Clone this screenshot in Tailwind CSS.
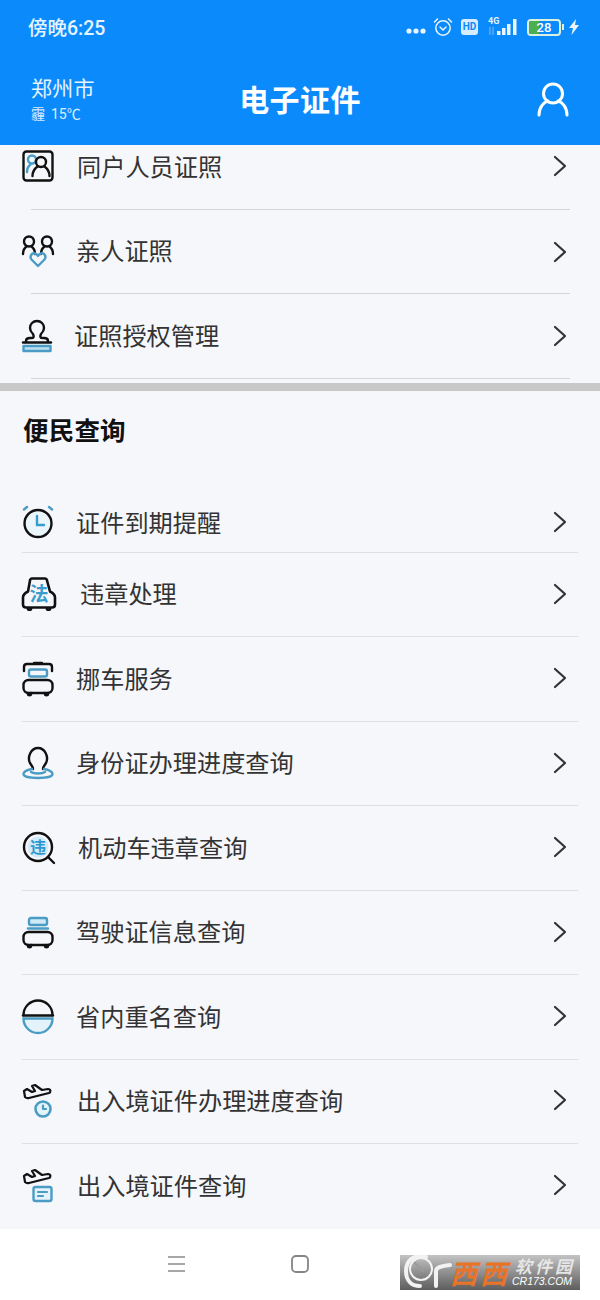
<!DOCTYPE html><html lang="zh-CN">
<head>
  <meta charset="UTF-8" />
  <meta name="viewport" content="width=device-width, initial-scale=1.0" />
  <title>电子证件</title>
  <script src="https://cdn.jsdelivr.net/npm/@tailwindcss/browser@4"></script>
</head>
<body class="bg-[#f6f7fb] text-[#333] font-['Roboto','Noto_Sans_CJK_SC',sans-serif]">
<div class="relative w-[600px] h-[1300px] overflow-hidden flex flex-col">

  <!-- Header -->
  <header class="h-[145px] bg-[#0b8bfb] text-white shrink-0">
    <div class="h-[54px] pl-[28px] pr-[20px] flex items-center justify-between">
      <span class="mt-[3px] text-[19.5px] font-medium text-white/90">傍晚6:25</span>
      <div class="flex items-center">
        <svg width="20" height="6" viewBox="0 0 20 6" class="mt-[8px]" fill="#eaf5ff"><circle cx="3" cy="3" r="2.6"/><circle cx="10" cy="3" r="2.6"/><circle cx="17" cy="3" r="2.6"/></svg>
        <svg width="20" height="20" viewBox="0 0 20 20" class="ml-[7px]" fill="none" stroke="#eaf5ff" stroke-width="1.5"><circle cx="10" cy="11" r="7.2"/><path d="M7 10l3 3 3-3M1.5 5l3-3M18.5 5l-3-3" stroke-linecap="round"/></svg>
        <span class="ml-[8px] w-[17px] h-[16px] rounded-[3px] bg-[#d8ecff] text-[#0b8bfb] text-[10px] font-bold leading-[16px] text-center">HD</span>
        <div class="relative ml-[10px] w-[32px] h-[18px]">
          <span class="absolute left-0 -top-[2px] text-[9px] font-bold leading-[10px] text-white/90">4G</span>
          <svg width="32" height="18" viewBox="0 0 32 18" fill="#eaf5ff"><rect x="9" y="13" width="3.500" height="4"/><rect x="14" y="10" width="3.500" height="7"/><rect x="19" y="6" width="3.500" height="11"/><rect x="25" y="1" width="3.500" height="16"/><path d="M2 9v8M5 9v8" stroke="#7cc0f5" stroke-width="1"/></svg>
        </div>
        <div class="ml-[7px] relative w-[34px] h-[17px] rounded-[4px] border-2 border-[#d9f0e2] overflow-hidden">
          <div class="absolute inset-y-0 left-0 w-[10px] bg-[#4caf50]"></div>
          <span class="absolute inset-0 text-center text-[13px] leading-[13px] font-medium text-white">28</span>
        </div>
        <span class="ml-[1px] w-[2px] h-[6px] bg-[#d9f0e2]"></span>
        <svg width="11" height="16" viewBox="0 0 11 16" class="ml-[5px]" fill="#eaf5ff"><path d="M7 0L0 9h4l-1.500 7L10 6H6z"/></svg>
      </div>
    </div>
    <div class="h-[91px] pl-[31px] pr-[31px] grid grid-cols-[1fr_auto_1fr] items-start">
      <div>
        <div class="mt-[21px] text-[21px] leading-[28px] tracking-[0.3px] text-white/90">郑州市</div>
        <div class="mt-[2px] flex items-center text-[14px] leading-[18px] text-white/85"><span class="text-[14px]">霾</span><span class="ml-[6px]">15℃</span></div>
      </div>
      <h1 class="mt-[25px] text-[30px] leading-[44px] tracking-[0.4px] font-bold">电子证件</h1>
      <div class="flex justify-end">
        <svg width="32" height="36" viewBox="0 0 32 36" class="mt-[27px]" fill="none" stroke="white" stroke-width="3" stroke-linecap="round"><circle cx="16" cy="12.500" r="9.500"/><path d="M2 34c0-8 5-13 9-14M30 34c0-8-5-13-9-14"/></svg>
      </div>
    </div>
  </header>

  <!-- Top list -->
  <section class="shrink-0 text-[24.2px]">
    <div class="h-[65px] ml-[31px] mr-[30px] pb-[22px] border-b border-[#d4d4d4] flex items-center justify-between pr-[2px]">
      <div class="flex items-center -ml-[11px]">
        <svg width="36" height="36" viewBox="0 0 36 36" fill="none" stroke-width="2.400" stroke-linecap="round"><rect x="3.500" y="3.500" width="29" height="29" rx="3" stroke="#111"/><circle cx="12" cy="11.500" r="4" stroke="#4a9cc4"/><path d="M7 24c0-4 1.500-6 3.500-7.500" stroke="#4a9cc4"/><circle cx="21" cy="14" r="5" stroke="#111"/><path d="M12.500 28c0-5 3-8 5-9.500M29.500 28c0-5-3-8-5-9.500" stroke="#111"/></svg>
        <span class="ml-[21px] mt-[4px]">同户人员证照</span>
      </div>
      <svg width="16" height="24" viewBox="0 0 16 24" fill="none" stroke="#333" stroke-width="2.2" stroke-linecap="round" stroke-linejoin="round"><path d="M3 3l10 9-10 9"/></svg>
    </div>
    <div class="h-[84px] ml-[31px] mr-[30px] border-b border-[#d4d4d4] flex items-center justify-between pr-[2px]">
      <div class="flex items-center -ml-[11px]">
        <svg width="36" height="36" viewBox="0 0 36 36" fill="none" stroke-width="2.400" stroke-linecap="round"><circle cx="9" cy="8.500" r="5" stroke="#111"/><circle cx="27" cy="8.500" r="5" stroke="#111"/><path d="M3 21c0-4 1.500-6 3.500-7.500M15 21c0-4-1.500-6-3.500-7.500M21 21c0-4 1.500-6 3.500-7.500M33 21c0-4-1.500-6-3.500-7.500" stroke="#111"/><path d="M18 33l-6.500-6.500c-2.500-3 .5-7 3.500-6 1.500.5 2.500 1.500 3 2.500.5-1 1.500-2 3-2.500 3-1 6 3 3.500 6z" stroke="#4a9cc4" stroke-linejoin="round"/></svg>
        <span class="ml-[20px] mt-[2px]">亲人证照</span>
      </div>
      <svg width="16" height="24" viewBox="0 0 16 24" fill="none" stroke="#333" stroke-width="2.2" stroke-linecap="round" stroke-linejoin="round"><path d="M3 3l10 9-10 9"/></svg>
    </div>
    <div class="h-[85px] ml-[31px] mr-[30px] border-b border-[#d4d4d4] flex items-center justify-between pr-[2px]">
      <div class="flex items-center -ml-[11px]">
        <svg width="36" height="36" viewBox="0 0 36 36" fill="none" stroke-width="2.400" stroke-linecap="round" stroke-linejoin="round"><path d="M3 24.500h28" stroke="#111"/><path d="M6 24v-1c0-2 2-3 4-3h2c2 0 2-2 1-4-1-1-3-4-3-6 0-4 3-7 7-7s7 3 7 7c0 2-2 5-3 6-1 2-1 4 1 4h2c2 0 4 1 4 3v1" stroke="#111"/><rect x="3.500" y="28" width="27" height="5" fill="#bfe0f2" stroke="#4a9cc4"/></svg>
        <span class="ml-[18px] mt-[2px]">证照授权管理</span>
      </div>
      <svg width="16" height="24" viewBox="0 0 16 24" fill="none" stroke="#333" stroke-width="2.2" stroke-linecap="round" stroke-linejoin="round"><path d="M3 3l10 9-10 9"/></svg>
    </div>
  </section>

  <div class="mt-[4px] h-[8px] bg-[#c8c8c8] shrink-0"></div>

  <!-- 便民查询 -->
  <section class="flex-1 text-[24.2px]">
    <h2 class="h-[80px] pl-[23px] flex items-center text-[25.5px] tracking-[0.2px] font-bold text-[#111]">便民查询</h2>
    <div class="mt-[21px] h-[61px] ml-[22px] mr-[22px] border-b border-[#dfdfdf] flex items-center justify-between pr-[10px]">
      <div class="flex items-center -ml-[2px]">
        <svg width="36" height="36" viewBox="0 0 36 36" fill="none" stroke-width="2.400" stroke-linecap="round"><circle cx="18" cy="19.500" r="13.500" fill="#eaf6fc" stroke="#111"/><path d="M17 12v9h7" stroke="#3a9ccc"/><path d="M4 5.500l3-2.500M32 5.500l-3-2.500" stroke="#4a9cc4"/></svg>
        <span class="ml-[20px] mt-[5px]">证件到期提醒</span>
      </div>
      <svg width="16" height="24" viewBox="0 0 16 24" fill="none" stroke="#333" stroke-width="2.2" stroke-linecap="round" stroke-linejoin="round"><path d="M3 3l10 9-10 9"/></svg>
    </div>
    <div class="h-[84px] ml-[22px] mr-[22px] border-b border-[#dfdfdf] flex items-center justify-between pr-[10px]">
      <div class="flex items-center -ml-[2px]">
        <svg width="38" height="36" viewBox="0 0 38 36" fill="none" stroke="#111" stroke-width="2.600" stroke-linejoin="round"><path d="M12 2.500h13c1 0 2 1 2 2l3 11c2 1 5 3 5 6v7c0 2-1 3-3 3H6c-2 0-3-1-3-3v-7c0-3 3-5 5-6l2-11c0-1 1-2 2-2z"/><path d="M8 31v2c0 1 3 1 3 0v-2M27 31v2c0 1 3 1 3 0v-2"/><text x="19" y="25" text-anchor="middle" font-size="19" font-weight="700" fill="#3a9ccc" stroke="none" font-family="Noto Sans CJK SC">法</text></svg>
        <span class="ml-[22px] mt-[2px]">违章处理</span>
      </div>
      <svg width="16" height="24" viewBox="0 0 16 24" class="-mt-[2px]" fill="none" stroke="#333" stroke-width="2.2" stroke-linecap="round" stroke-linejoin="round"><path d="M3 3l10 9-10 9"/></svg>
    </div>
    <div class="h-[85px] ml-[22px] mr-[22px] border-b border-[#dfdfdf] flex items-center justify-between pr-[10px]">
      <div class="flex items-center -ml-[2px]">
        <svg width="36" height="36" viewBox="0 0 36 36" fill="none" stroke-width="2.400" stroke-linecap="round" stroke-linejoin="round"><path d="M4 10V6c0-2 1-3 3-3h22c2 0 3 1 3 3v4M14 2h8" stroke="#111"/><rect x="9" y="8.500" width="18" height="7" rx="2" stroke="#4a9cc4"/><rect x="3.500" y="19" width="29" height="13" rx="5" stroke="#111"/><path d="M8 32v1.500c0 1 3 1 3 0V32M25 32v1.500c0 1 3 1 3 0V32" stroke="#111"/></svg>
        <span class="ml-[20px] mt-[2px]">挪车服务</span>
      </div>
      <svg width="16" height="24" viewBox="0 0 16 24" class="-mt-[2px]" fill="none" stroke="#333" stroke-width="2.2" stroke-linecap="round" stroke-linejoin="round"><path d="M3 3l10 9-10 9"/></svg>
    </div>
    <div class="h-[84px] ml-[22px] mr-[22px] border-b border-[#dfdfdf] flex items-center justify-between pr-[10px]">
      <div class="flex items-center -ml-[2px]">
        <svg width="36" height="36" viewBox="0 0 36 36" fill="none" stroke-width="2.400" stroke-linecap="round" stroke-linejoin="round"><path d="M13 24c0-2-1-3-3-6-3-6 1-15 8-15s11 9 8 15c-2 3-3 4-3 6" stroke="#111"/><path d="M12 24c-5 1-8.500 2.500-8.500 5 0 2.500 6 4 14.500 4s14.500-1.500 14.500-4c0-2.500-3.500-4-8.500-5" stroke="#4a9cc4"/><path d="M11 27c3 2 11 2 14 0" stroke="#4a9cc4"/></svg>
        <span class="ml-[20px] mt-[2px]">身份证办理进度查询</span>
      </div>
      <svg width="16" height="24" viewBox="0 0 16 24" class="-mt-[2px]" fill="none" stroke="#333" stroke-width="2.2" stroke-linecap="round" stroke-linejoin="round"><path d="M3 3l10 9-10 9"/></svg>
    </div>
    <div class="h-[85px] ml-[22px] mr-[22px] border-b border-[#dfdfdf] flex items-center justify-between pr-[10px]">
      <div class="flex items-center -ml-[2px]">
        <svg width="36" height="36" viewBox="0 0 36 36" fill="none" stroke-linecap="round"><circle cx="18" cy="17" r="14" stroke="#111" stroke-width="2.400"/><circle cx="18" cy="17" r="10.500" fill="#d2ebf8"/><path d="M28 27l6 6" stroke="#111" stroke-width="2.400"/><text x="18" y="23" text-anchor="middle" font-size="16" font-weight="700" fill="#2f97cf" font-family="Noto Sans CJK SC">违</text></svg>
        <span class="ml-[22px] mt-[2px]">机动车违章查询</span>
      </div>
      <svg width="16" height="24" viewBox="0 0 16 24" class="-mt-[2px]" fill="none" stroke="#333" stroke-width="2.2" stroke-linecap="round" stroke-linejoin="round"><path d="M3 3l10 9-10 9"/></svg>
    </div>
    <div class="h-[84px] ml-[22px] mr-[22px] border-b border-[#dfdfdf] flex items-center justify-between pr-[10px]">
      <div class="flex items-center -ml-[2px]">
        <svg width="36" height="36" viewBox="0 0 36 36" fill="none" stroke-width="2.400" stroke-linecap="round" stroke-linejoin="round"><rect x="9" y="4" width="18" height="7" rx="2" fill="#cfe9f7" stroke="#4a9cc4"/><path d="M8 14.500h20" stroke="#4a9cc4"/><rect x="3.500" y="18" width="29" height="13" rx="5" stroke="#111"/><path d="M8 31v1.500c0 1 3 1 3 0V31M25 31v1.500c0 1 3 1 3 0V31" stroke="#111"/></svg>
        <span class="ml-[20px] mt-[2px]">驾驶证信息查询</span>
      </div>
      <svg width="16" height="24" viewBox="0 0 16 24" class="-mt-[2px]" fill="none" stroke="#333" stroke-width="2.2" stroke-linecap="round" stroke-linejoin="round"><path d="M3 3l10 9-10 9"/></svg>
    </div>
    <div class="h-[85px] ml-[22px] mr-[22px] border-b border-[#dfdfdf] flex items-center justify-between pr-[10px]">
      <div class="flex items-center -ml-[2px]">
        <svg width="36" height="36" viewBox="0 0 36 36" fill="none" stroke-width="2.400" stroke-linecap="round"><path d="M3.500 16a14.500 14.500 0 0 1 29 0" stroke="#111"/><path d="M3 16.500h30" stroke="#111"/><path d="M3.500 19.500a14.500 14.500 0 0 0 29 0z" fill="#e4f3fa" stroke="#4a9cc4"/></svg>
        <span class="ml-[20px] mt-[2px]">省内重名查询</span>
      </div>
      <svg width="16" height="24" viewBox="0 0 16 24" class="-mt-[2px]" fill="none" stroke="#333" stroke-width="2.2" stroke-linecap="round" stroke-linejoin="round"><path d="M3 3l10 9-10 9"/></svg>
    </div>
    <div class="h-[84px] ml-[22px] mr-[22px] border-b border-[#dfdfdf] flex items-center justify-between pr-[10px]">
      <div class="flex items-center -ml-[2px]">
        <svg width="36" height="36" viewBox="0 0 36 36" fill="none" stroke-width="2.200" stroke-linecap="round" stroke-linejoin="round"><path d="M4 8l3-2 5 3 3-1-3-5 3-1 7 5 6-1c3 0 3 3 1 4l-20 5c-2 .500-3 0-4-1z" stroke="#111"/><circle cx="23" cy="26" r="7.500" fill="#e4f3fa" stroke="#4a9cc4" stroke-width="2.600"/><path d="M23 22.500V26h3" stroke="#4a9cc4"/></svg>
        <span class="ml-[21px] mt-[2px]">出入境证件办理进度查询</span>
      </div>
      <svg width="16" height="24" viewBox="0 0 16 24" class="-mt-[4px]" fill="none" stroke="#333" stroke-width="2.2" stroke-linecap="round" stroke-linejoin="round"><path d="M3 3l10 9-10 9"/></svg>
    </div>
    <div class="h-[85px] ml-[22px] mr-[22px] flex items-center justify-between pr-[10px]">
      <div class="flex items-center -ml-[2px]">
        <svg width="36" height="36" viewBox="0 0 36 36" fill="none" stroke-width="2.200" stroke-linecap="round" stroke-linejoin="round"><path d="M4 8l3-2 5 3 3-1-3-5 3-1 7 5 6-1c3 0 3 3 1 4l-20 5c-2 .500-3 0-4-1z" stroke="#111"/><rect x="13.500" y="19" width="18" height="14" rx="2" fill="#e4f3fa" stroke="#4a9cc4" stroke-width="2.400"/><path d="M18 24h9M18 28h5" stroke="#4a9cc4"/></svg>
        <span class="ml-[21px] mt-[2px]">出入境证件查询</span>
      </div>
      <svg width="16" height="24" viewBox="0 0 16 24" class="-mt-[4px]" fill="none" stroke="#333" stroke-width="2.2" stroke-linecap="round" stroke-linejoin="round"><path d="M3 3l10 9-10 9"/></svg>
    </div>
  </section>

  <!-- Bottom nav -->
  <footer class="h-[71px] bg-white shrink-0 relative">
    <svg width="18" height="18" viewBox="0 0 18 18" class="absolute left-[168px] top-[26px]" stroke="#8a8a8a" stroke-width="1.500"><path d="M0 2h17M0 9h17M0 16h17"/></svg>
    <svg width="18" height="18" viewBox="0 0 18 18" class="absolute left-[291px] top-[26px]" fill="none" stroke="#858585" stroke-width="1.800"><rect x="1" y="1" width="16" height="16" rx="4"/></svg>
  </footer>

  <!-- Watermark -->
  <div class="absolute left-[400px] top-[1255px] w-[180px] h-[35px] bg-gradient-to-b from-[#c4c4c4] to-[#5e5e5e]">
    <svg width="56" height="35" viewBox="0 0 56 35" class="absolute left-0 top-0" fill="none" stroke="#f2f2f2" stroke-linecap="round"><path d="M26 2C13-1 6 6 6 16s6 15 14 15" stroke-width="4"/><circle cx="21" cy="14" r="11" stroke-width="2"/><path d="M15 8l8 8" stroke="#9a9a9a" stroke-width="2"/><path d="M36 31V16c0-4 6-5 14-6" stroke-width="4"/></svg>
    <span class="absolute left-[50px] top-[3px] text-[27px] leading-[30px] font-bold italic tracking-[3px] text-[#e8742a] [font-family:'Noto_Sans_CJK_SC']">西西</span>
    <span class="absolute left-[115px] top-[2px] text-[17px] leading-[18px] font-bold italic tracking-[3px] text-[#e6e6e6] [font-family:'Noto_Sans_CJK_SC']">软件园</span>
    <span class="absolute left-[112px] top-[20px] text-[10.5px] leading-[12px] italic text-white [font-family:'Liberation_Sans']">CR173.COM</span>
  </div>
</div>
</body>
</html>
